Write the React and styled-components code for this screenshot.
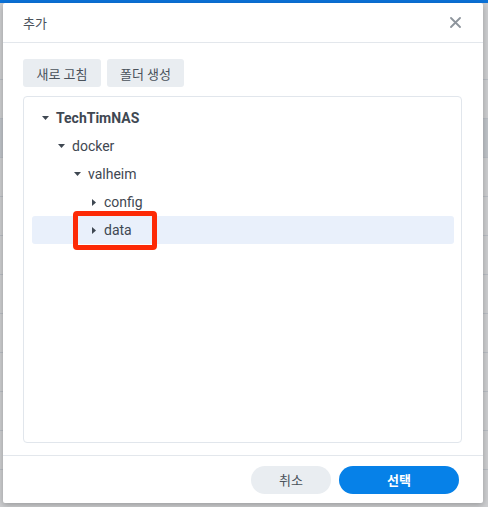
import React from "react";
import styled, { createGlobalStyle } from "styled-components";

const Global = createGlobalStyle`
  html, body { margin: 0; padding: 0; }
  body {
    width: 488px; height: 507px; overflow: hidden;
    font-family: Roboto, "Noto Sans CJK KR", sans-serif;
    background: #cfd0d2;
  }
`;

const Page = styled.div`
  position: relative;
  width: 488px;
  height: 507px;
  overflow: hidden;
  background: #cdced0;
`;

const TopBar = styled.div`
  height: 3px;
  background: #0b72d8;
`;

const BackList = styled.div`
  display: flex;
  flex-direction: column;
  padding-top: 36px;
`;

const BackRow = styled.div`
  height: ${(p) => p.h}px;
  border-bottom: 1px solid #b9bdc3;
  background: ${(p) => (p.hl ? "#bfc3c8" : "transparent")};
`;

const Dialog = styled.div`
  position: absolute;
  left: 3px;
  top: 3px;
  width: 480px;
  height: 500px;
  background: #fff;
  border-radius: 2px;
  box-shadow: 0 2px 6px rgba(0, 0, 0, 0.25);
  display: flex;
  flex-direction: column;
`;

const Header = styled.div`
  height: 39px;
  border-bottom: 1px solid #e3e7ec;
  display: flex;
  align-items: center;
  justify-content: space-between;
  padding: 0 20px 0 20px;
`;

const Title = styled.div`
  font: 13px "Noto Sans CJK KR", sans-serif;
  color: #4a525b;
`;

const CloseBtn = styled.button`
  border: 0;
  background: none;
  padding: 0;
  width: 16px;
  height: 16px;
  display: flex;
  align-items: center;
  justify-content: center;
`;

const Body = styled.div`
  flex: 1;
  display: flex;
  flex-direction: column;
  padding: 16px 21px 12px 20px;
  gap: 9px;
`;

const Toolbar = styled.div`
  display: flex;
  gap: 6px;
`;

const ToolButton = styled.button`
  height: 28px;
  width: ${(p) => p.w}px;
  border: 0;
  border-radius: 3px;
  background: #e9edf1;
  color: #4a525b;
  font: 13px "Noto Sans CJK KR", sans-serif;
  padding: 0;
`;

const TreePanel = styled.div`
  flex: 1;
  border: 1px solid #e1e6ec;
  border-radius: 4px;
  padding: 7px 7px 0 8px;
  display: flex;
  flex-direction: column;
`;

const Row = styled.div`
  position: relative;
  height: 28px;
  display: flex;
  align-items: center;
  padding-left: ${(p) => 10 + p.level * 16}px;
  border-radius: 3px;
  background: ${(p) => (p.selected ? "#e9f0fb" : "transparent")};
  color: #3f4852;
  font-size: 14px;
  font-weight: ${(p) => (p.bold ? 700 : 400)};
`;

const Caret = styled.span`
  width: 7px;
  height: 8px;
  display: flex;
  align-items: center;
  justify-content: ${(p) => (p.open ? "flex-start" : "center")};
  margin-right: 7px;
`;

const Label = styled.span`
  line-height: 1;
  padding-bottom: 1px;
`;

const Highlight = styled.div`
  position: absolute;
  left: ${(p) => p.left}px;
  top: -5px;
  width: 84px;
  height: 39px;
  box-sizing: border-box;
  border: 5px solid #fd2a06;
  border-radius: 4px;
`;

const Footer = styled.div`
  height: 47px;
  border-top: 1px solid #e3e7ec;
  display: flex;
  align-items: center;
  justify-content: flex-end;
  gap: 8px;
  padding: 0 24px 0 0;
`;

const FootButton = styled.button`
  height: 28px;
  width: ${(p) => p.w}px;
  border: 0;
  border-radius: 14px;
  padding: 0;
  background: ${(p) => (p.primary ? "#0681e8" : "#e9edf1")};
  color: ${(p) => (p.primary ? "#fff" : "#4a525b")};
  font: ${(p) => (p.primary ? 700 : 400)} 13px "Noto Sans CJK KR", sans-serif;
`;

const Down = () => (
  <svg width="7" height="4" viewBox="0 0 7 4">
    <path d="M0 0 L7 0 L3.5 4 Z" fill="#3f4852" />
  </svg>
);

const Right = () => (
  <svg width="4" height="7" viewBox="0 0 4 7">
    <path d="M0 0 L4 3.5 L0 7 Z" fill="#3f4852" />
  </svg>
);

const tree = [
  { label: "TechTimNAS", level: 0, open: true, bold: true },
  { label: "docker", level: 1, open: true },
  { label: "valheim", level: 2, open: true },
  { label: "config", level: 3, open: false },
  { label: "data", level: 3, open: false, selected: true },
];

export default function App() {
  return (
    <>
      <Global />
      <Page>
        <TopBar />
        <BackList>
          <BackRow h={40} />
          <BackRow h={38} />
          <BackRow h={38} hl />
          <BackRow h={38} />
          <BackRow h={38} />
          <BackRow h={38} />
          <BackRow h={38} />
          <BackRow h={38} />
          <BackRow h={38} />
          <BackRow h={38} />
          <BackRow h={38} />
        </BackList>
        <Dialog>
          <Header>
            <Title>추가</Title>
            <CloseBtn aria-label="close">
              <svg width="11" height="11" viewBox="0 0 11 11">
                <path
                  d="M1 1 L10 10 M10 1 L1 10"
                  stroke="#8d949c"
                  strokeWidth="1.8"
                  strokeLinecap="round"
                />
              </svg>
            </CloseBtn>
          </Header>
          <Body>
            <Toolbar>
              <ToolButton w={78}>새로 고침</ToolButton>
              <ToolButton w={77}>폴더 생성</ToolButton>
            </Toolbar>
            <TreePanel>
              {tree.map((n) => (
                <Row key={n.label} level={n.level} bold={n.bold} selected={n.selected}>
                  <Caret open={n.open}>{n.open ? <Down /> : <Right />}</Caret>
                  <Label>{n.label}</Label>
                  {n.selected && <Highlight left={n.level * 16 - 7} />}
                </Row>
              ))}
            </TreePanel>
          </Body>
          <Footer>
            <FootButton w={80}>취소</FootButton>
            <FootButton w={120} primary>
              선택
            </FootButton>
          </Footer>
        </Dialog>
      </Page>
    </>
  );
}
